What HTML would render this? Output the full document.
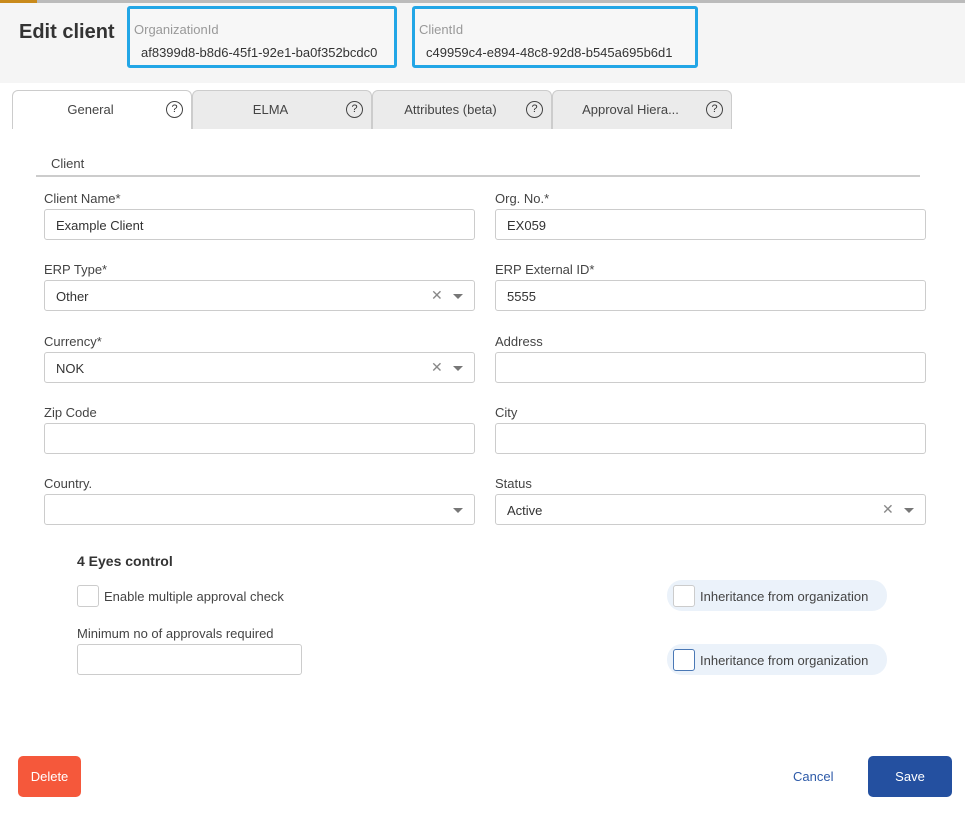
<!DOCTYPE html>
<html><head><style>
*{box-sizing:border-box;margin:0;padding:0}
body{width:965px;height:814px;background:#fff;font-family:"Liberation Sans",sans-serif;color:#333;position:relative;overflow:hidden;font-size:13px}
.a{position:absolute}
.hdr{left:0;top:0;width:965px;height:83px;background:#f5f5f5}
.idbox{border:3px solid #22a6e6;border-radius:3px;background:#f7f7f7;height:62px;top:6px}
.idbox .l{position:absolute;left:4px;top:13px;color:#999;font-size:13px}
.idbox .v{position:absolute;left:11px;top:36px;font-size:13px;color:#333}
.tab{top:90px;height:39px;border:1px solid #ccc;border-bottom:none;background:#ebebeb;border-radius:6px 6px 0 0;font-size:13px;color:#444}
.tab span{position:absolute;top:11px;text-align:center}
.q{position:absolute;top:10px;width:17px;height:17px;border:1.3px solid #444;border-radius:50%;font-size:11px;line-height:15px;text-align:center;color:#333}
.lab{font-size:13px;color:#444}
.in{border:1px solid #ccc;border-radius:3px;height:31px;width:431px;font-size:13px;padding:8px 11px;color:#333}
.x{position:absolute;top:6px;color:#888;font-size:14px}
.car{position:absolute;top:13px;width:0;height:0;border-left:5px solid transparent;border-right:5px solid transparent;border-top:5px solid #777}
.cb{width:22px;height:22px;border:1px solid #ccc;border-radius:3px;background:#fff}
.pill{background:#ebf2fa;border-radius:15px;height:31px;width:220px}
</style></head><body>
<div class="a" style="left:0;top:0;width:965px;height:3px;background:#bbb"></div>
<div class="a hdr" style="top:3px;height:80px"></div>
<div class="a" style="left:0;top:0;width:37px;height:3px;background:#c98a1b"></div>
<div class="a" style="left:19px;top:21px;font-size:20px;font-weight:bold;color:#333">Edit client</div>
<div class="a idbox" style="left:127px;width:270px"><div class="l">OrganizationId</div><div class="v">af8399d8-b8d6-45f1-92e1-ba0f352bcdc0</div></div>
<div class="a idbox" style="left:412px;width:286px"><div class="l">ClientId</div><div class="v">c49959c4-e894-48c8-92d8-b545a695b6d1</div></div>

<div class="a tab" style="left:12px;width:180px;background:#fff"><span style="left:0;width:155px">General</span><div class="q" style="left:153px">?</div></div>
<div class="a tab" style="left:192px;width:180px"><span style="left:0;width:155px">ELMA</span><div class="q" style="left:153px">?</div></div>
<div class="a tab" style="left:372px;width:180px"><span style="left:0;width:155px">Attributes (beta)</span><div class="q" style="left:153px">?</div></div>
<div class="a tab" style="left:552px;width:180px"><span style="left:0;width:155px">Approval Hiera...</span><div class="q" style="left:153px">?</div></div>

<div class="a lab" style="left:51px;top:156px">Client</div>
<div class="a" style="left:36px;top:175px;width:884px;height:2px;background:#ccc"></div>

<div class="a lab" style="left:44px;top:191px">Client Name*</div>
<div class="a in" style="left:44px;top:209px">Example Client</div>
<div class="a lab" style="left:495px;top:191px">Org. No.*</div>
<div class="a in" style="left:495px;top:209px">EX059</div>

<div class="a lab" style="left:44px;top:262px">ERP Type*</div>
<div class="a in" style="left:44px;top:280px">Other<span class="x" style="left:386px">✕</span><span class="car" style="left:408px"></span></div>
<div class="a lab" style="left:495px;top:262px">ERP External ID*</div>
<div class="a in" style="left:495px;top:280px">5555</div>

<div class="a lab" style="left:44px;top:334px">Currency*</div>
<div class="a in" style="left:44px;top:352px">NOK<span class="x" style="left:386px">✕</span><span class="car" style="left:408px"></span></div>
<div class="a lab" style="left:495px;top:334px">Address</div>
<div class="a in" style="left:495px;top:352px"></div>

<div class="a lab" style="left:44px;top:405px">Zip Code</div>
<div class="a in" style="left:44px;top:423px"></div>
<div class="a lab" style="left:495px;top:405px">City</div>
<div class="a in" style="left:495px;top:423px"></div>

<div class="a lab" style="left:44px;top:476px">Country.</div>
<div class="a in" style="left:44px;top:494px"><span class="car" style="left:408px"></span></div>
<div class="a lab" style="left:495px;top:476px">Status</div>
<div class="a in" style="left:495px;top:494px">Active<span class="x" style="left:386px">✕</span><span class="car" style="left:408px"></span></div>

<div class="a" style="left:77px;top:553px;font-size:14px;font-weight:bold;color:#333">4 Eyes control</div>
<div class="a cb" style="left:77px;top:585px"></div>
<div class="a lab" style="left:104px;top:589px">Enable multiple approval check</div>
<div class="a lab" style="left:77px;top:626px">Minimum no of approvals required</div>
<div class="a in" style="left:77px;top:644px;width:225px"></div>

<div class="a pill" style="left:667px;top:580px"></div>
<div class="a cb" style="left:673px;top:585px"></div>
<div class="a lab" style="left:700px;top:589px">Inheritance from organization</div>
<div class="a pill" style="left:667px;top:644px"></div>
<div class="a cb" style="left:673px;top:649px;border-color:#4a78b5"></div>
<div class="a lab" style="left:700px;top:653px">Inheritance from organization</div>

<div class="a" style="left:18px;top:756px;width:63px;height:41px;background:#f5583b;border-radius:5px;color:#fff;font-size:13px;text-align:center;line-height:41px">Delete</div>
<div class="a" style="left:793px;top:769px;color:#2d5aa8;font-size:13px">Cancel</div>
<div class="a" style="left:868px;top:756px;width:84px;height:41px;background:#2450a0;border-radius:5px;color:#fff;font-size:13px;text-align:center;line-height:41px">Save</div>
</body></html>
